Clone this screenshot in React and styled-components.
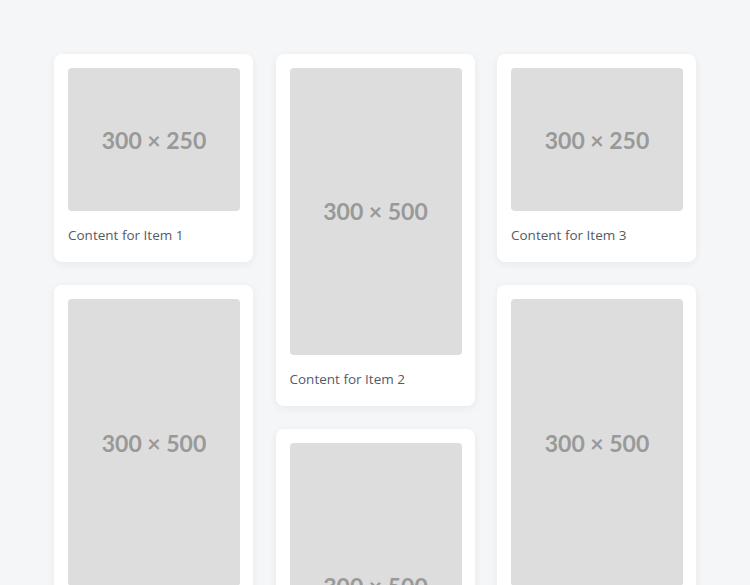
import React from "react";
import styled, { createGlobalStyle } from "styled-components";

const Global = createGlobalStyle`
  html, body { margin: 0; padding: 0; background: #f5f6f8; }
  body { font-family: "Open Sans", "Noto Sans", sans-serif; overflow: hidden; }
`;

const Page = styled.div`
  padding: 54px;
  display: flex;
  gap: 22.5px;
  align-items: flex-start;
`;

const Column = styled.div`
  flex: 1;
  display: flex;
  flex-direction: column;
  gap: 23px;
  min-width: 0;
`;

const Card = styled.div`
  background: #fff;
  border-radius: 8px;
  box-shadow: 0 2px 8px rgba(0, 0, 0, 0.06);
  padding: 14px 13px 16px 14px;
`;

const Placeholder = styled.div`
  background: #dddddd;
  border-radius: 4px;
  aspect-ratio: ${(p) => p.$w} / ${(p) => p.$h};
  display: flex;
  align-items: center;
  justify-content: center;
  color: #999999;
  font-family: Lato, "Open Sans", sans-serif;
  font-weight: 700;
  font-size: 23px;
`;

const Caption = styled.p`
  margin: 14px 0 0;
  font-size: 13.5px;
  line-height: 21px;
  color: #555b66;
`;

const Item = ({ h, n }) => (
  <Card>
    <Placeholder $w={300} $h={h}>300 × {h}</Placeholder>
    {n && <Caption>Content for Item {n}</Caption>}
  </Card>
);

export default function App() {
  return (
    <>
      <Global />
      <Page>
        <Column>
          <Item h={250} n={1} />
          <Item h={500} n={4} />
        </Column>
        <Column>
          <Item h={500} n={2} />
          <Item h={500} n={5} />
        </Column>
        <Column>
          <Item h={250} n={3} />
          <Item h={500} n={6} />
        </Column>
      </Page>
    </>
  );
}
